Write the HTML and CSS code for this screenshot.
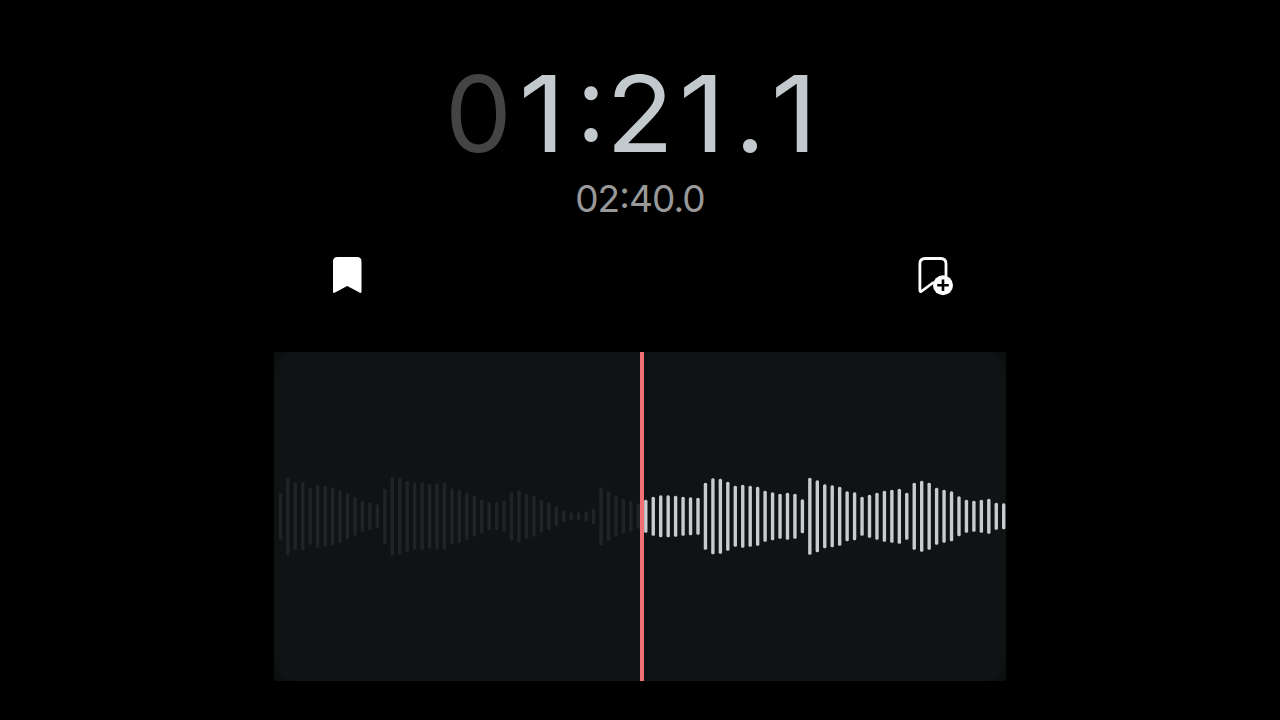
FILE: index.html
```html
<!DOCTYPE html>
<html lang="en">
<head>
    <meta charset="UTF-8">
    <meta name="viewport" content="width=device-width, initial-scale=1.0">
    <title>Recorder</title>
    <link rel="stylesheet" href="styles.css">
</head>
<body>
    <main class="player">
        <div class="time">
            <span class="zero">0</span><span class="one">1</span><span class="colon">:</span><span class="two">2</span><span class="one">1</span><span class="dot">.</span><span class="one">1</span>
        </div>
        <div class="duration"><span>02</span><span class="sep">:</span><span>40.0</span></div>

        <div class="actions">
            <svg class="icon" width="40" height="44" viewBox="0 0 40 44">
                <path fill="#fff" d="M6 7.500Q6 3 10.500 3H30Q34.500 3 34.500 7.500V37.500Q34.500 39.800 32.500 38.600L20.200 32L8 38.600Q6 39.800 6 37.500Z"/>
            </svg>
            <svg class="icon" width="40" height="44" viewBox="0 0 40 44">
                <path fill="none" stroke="#fff" stroke-width="2.800" stroke-linejoin="round" d="M32 22V9.800Q32 4.500 26.700 4.500H11.200Q5.900 4.500 5.900 9.800V36Q5.900 38.500 7.900 37L20 28"/>
                <circle cx="29" cy="31.200" r="10" fill="#fff"/>
                <path stroke="#000" stroke-width="2.600" d="M29 25.400V37M23.200 31.200H34.800"/>
            </svg>
        </div>

        <div class="wave">
            <svg class="bars" id="bars" width="732" height="329" viewBox="274 352 732 329"></svg>
            <div class="playhead"></div>
        </div>
    </main>
    <script src="wave.js"></script>
</body>
</html>
```

FILE: styles.css
```css
body {
    margin: 0;
    background: #000;
    font-family: Inter, sans-serif;
}
.player {
    width: 732px;
    height: 720px;
    margin: 0 auto;
    overflow: hidden;
}
.time {
    display: flex;
    box-sizing: border-box;
    padding: 59px 0 0 171px;
    font-size: 106px;
    line-height: 109px;
    color: #c3cace;
}
.time span {
    display: flex;
    justify-content: center;
}
.time .zero {
    width: 67px;
    color: #444;
}
.time .one {
    width: 58px;
    transform: translateX(1px) scaleX(1.08);
}
.time .colon {
    width: 42px;
    transform: translateY(-11px) scale(0.95, 1);
}
.time .two {
    width: 60px;
    transform: translateX(-2px) scaleX(1.05);
}
.time .dot {
    width: 40px;
    margin-right: -6px;
}
.duration {
    display: flex;
    justify-content: center;
    margin-top: 9px;
    font-size: 37px;
    line-height: 44px;
    letter-spacing: -0.9px;
    color: #999;
}
.duration .sep {
    transform: translateY(-4px);
}
.actions {
    display: flex;
    justify-content: space-between;
    margin-top: 33px;
    padding: 0 52px 0 53px;
}
.icon {
    display: block;
}
.wave {
    position: relative;
    height: 329px;
    margin-top: 54px;
    background: #0c0f0f;
}
.bars {
    display: block;
    border-radius: 20px;
    background: #0f1313;
}
.bars .played {
    fill: #202425;
}
.bars .ahead {
    fill: #c7ccd1;
}
.playhead {
    position: absolute;
    left: 366px;
    top: 0;
    width: 4px;
    height: 100%;
    background: #f27073;
}
```

FILE: wave.js
```js
const levels = [
    47, 78, 68, 68, 57, 63, 61, 58, 53, 46, 39, 31, 28, 24,
    55, 79, 77, 71, 67, 68, 65, 66, 67, 56, 53, 47, 41, 34, 28, 28,
    31, 48, 52, 45, 41, 33, 28, 20, 12, 8, 8, 10, 16,
    58, 49, 41, 35, 31, 25,
    33, 39, 42, 42, 41, 39, 38, 37, 67, 76, 75, 69, 61, 63, 61, 59,
    51, 48, 45, 47, 45, 34, 77, 72, 64, 62, 59, 50, 48, 39, 43, 47,
    51, 53, 55, 47, 67, 71, 67, 57, 53, 50, 40, 33, 31, 33, 35, 27, 26
];
const playedCount = 49;
const svg = document.getElementById('bars');

levels.forEach((h, i) => {
    const bar = document.createElementNS('http://www.w3.org/2000/svg', 'rect');
    bar.setAttribute('class', i < playedCount ? 'played' : 'ahead');
    bar.setAttribute('x', 278.7 + i * 7.457);
    bar.setAttribute('y', 516.3 - h / 2);
    bar.setAttribute('width', 3.4);
    bar.setAttribute('height', h);
    bar.setAttribute('rx', 1.5);
    svg.appendChild(bar);
});
```
